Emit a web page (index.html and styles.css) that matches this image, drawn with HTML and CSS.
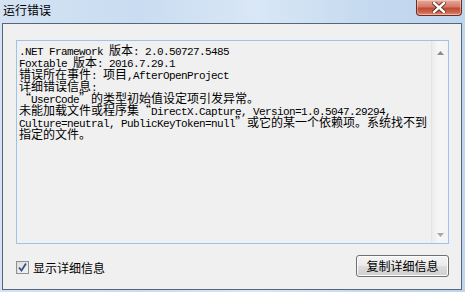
FILE: index.html
```html
<!DOCTYPE html>
<html>
<head>
<meta charset="utf-8">
<link rel="stylesheet" href="styles.css">
</head>
<body>
<div class="window">
  <div class="titlebar">
    <span class="title">运行错误</span>
    <div class="close">
      <svg width="14" height="11" viewBox="0 0 14 11">
        <path d="M2 1 L12 10 M12 1 L2 10" stroke="#5a2a22" stroke-width="4.2" stroke-linecap="square"/>
        <path d="M2 1 L12 10 M12 1 L2 10" stroke="#ffffff" stroke-width="2.4" stroke-linecap="square"/>
      </svg>
    </div>
  </div>
  <div class="client">
    <div class="textbox">
      <div class="text">
        <div class="line">.NET Framework <span class="c">版本</span>: 2.0.50727.5485</div>
        <div class="line">Foxtable <span class="c">版本</span>: 2016.7.29.1</div>
        <div class="line"><span class="c">错误所在事件</span>: <span class="c">项目</span>,AfterOpenProject</div>
        <div class="line"><span class="c">详细错误信息</span>:</div>
        <div class="line"><span class="c">“</span>UserCode<span class="c">”的类型初始值设定项引发异常。</span></div>
        <div class="line"><span class="c">未能加载文件或程序集“</span>DirectX.Capture, Version=1.0.5047.29294,</div>
        <div class="line">Culture=neutral, PublicKeyToken=null<span class="c">”或它的某一个依赖项。系统找不到</span></div>
        <div class="line"><span class="c">指定的文件。</span></div>
      </div>
      <div class="scrollbar">
        <svg class="arrow" width="7" height="4" viewBox="0 0 7 4"><path d="M0 4 L3.5 0 L7 4 Z" fill="#8c8c8c"/></svg>
        <svg class="arrow" width="7" height="4" viewBox="0 0 7 4"><path d="M0 0 L7 0 L3.5 4 Z" fill="#a8a8a8"/></svg>
      </div>
    </div>
    <div class="footer">
      <label class="check">
        <span class="box">
          <svg width="11" height="11" viewBox="0 0 11 11"><path d="M2 5.5 L4.5 8.5 L9 1.5" fill="none" stroke="#3b4f8c" stroke-width="1.8"/></svg>
        </span>
        <span class="label">显示详细信息</span>
      </label>
      <button class="btn">复制详细信息</button>
    </div>
  </div>
</div>
</body>
</html>
```

FILE: styles.css
```css
html, body {
  margin: 0;
  padding: 0;
}
body {
  width: 465px;
  height: 292px;
  overflow: hidden;
  font-family: "Noto Sans CJK SC", sans-serif;
}
.window {
  width: 465px;
  height: 292px;
  box-sizing: border-box;
  padding: 0 3px 2px 2px;
  display: flex;
  flex-direction: column;
  background: linear-gradient(90deg, #d3e3f4 0%, #c9dcf1 30%, #d9e7f6 55%, #c4d9ef 80%, #bfd5ee 100%);
}
.titlebar {
  height: 23px;
  display: flex;
  align-items: flex-start;
  flex: none;
}
.title {
  font-size: 12px;
  line-height: 16px;
  margin-top: 2px;
  padding-left: 1px;
  color: #000;
}
.close {
  margin-left: auto;
  width: 46px;
  height: 16px;
  box-sizing: border-box;
  border: 1px solid #6e2b22;
  border-top: none;
  border-radius: 0 0 4px 4px;
  background: linear-gradient(180deg, #e9a99a 0%, #d47a68 45%, #c24a34 55%, #cf6a52 85%, #e29a84 100%);
  display: flex;
  align-items: center;
  justify-content: center;
  box-shadow: inset 0 0 0 1px rgba(255,255,255,0.35);
}
.client {
  flex: 1;
  min-height: 0;
  border: 1px solid #56677a;
  background: #f0f0f0;
  padding: 16px 12px 0 13px;
  display: flex;
  flex-direction: column;
}
.textbox {
  height: 204px;
  flex: none;
  box-sizing: border-box;
  border: 1px solid #9cc3ea;
  background: #f0f0f0;
  display: flex;
  overflow: hidden;
}
.text {
  flex: 1;
  padding: 3px 0 0 2px;
  font-family: "Liberation Mono", monospace;
  font-size: 11px;
  letter-spacing: -0.6px;
  color: #000;
}
.line {
  height: 12px;
  line-height: 12px;
  white-space: pre;
}
.c {
  font-family: "Noto Sans CJK SC", sans-serif;
  font-size: 12px;
  letter-spacing: 0;
  line-height: 12px;
}
.scrollbar {
  width: 17px;
  flex: none;
  box-sizing: border-box;
  border-left: 1px solid #e4e4e4;
  background: linear-gradient(90deg, #ececec, #f6f6f6 40%, #f3f3f3);
  display: flex;
  flex-direction: column;
  align-items: center;
  justify-content: space-between;
  padding: 10px 0 6px 0;
}
.arrow {
  display: block;
}
.footer {
  margin-top: 11px;
  display: flex;
  align-items: flex-start;
}
.check {
  display: flex;
  align-items: center;
  margin-top: 5px;
  gap: 4px;
}
.box {
  width: 13px;
  height: 13px;
  box-sizing: border-box;
  border: 1px solid #8e8f8f;
  background: linear-gradient(135deg, #dcdcdc, #f4f4f4);
  display: flex;
  align-items: center;
  justify-content: center;
}
.box svg {
  display: block;
}
.label {
  font-size: 12px;
  line-height: 15px;
  color: #000;
}
.btn {
  margin-left: auto;
  width: 93px;
  height: 22px;
  box-sizing: border-box;
  border: 1px solid #707070;
  border-radius: 3px;
  background: linear-gradient(180deg, #f4f4f4 0%, #ebebeb 48%, #dddddd 52%, #cfcfcf 100%);
  box-shadow: inset 0 0 0 1px #fcfcfc;
  font-family: "Noto Sans CJK SC", sans-serif;
  font-size: 12px;
  line-height: 18px;
  padding: 0;
  color: #000;
}
```
